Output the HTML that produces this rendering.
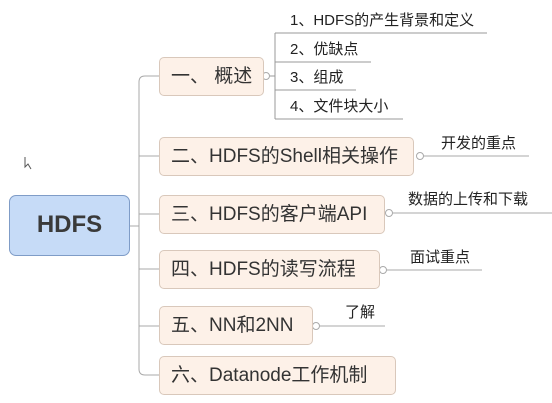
<!DOCTYPE html>
<html><head><meta charset="utf-8"><style>
body{margin:0;width:552px;height:403px;background:#fff;position:relative;overflow:hidden;font-family:"Liberation Sans","Noto Sans CJK SC",sans-serif;color:#333}
.b{position:absolute;background:#fdf1e8;border:1px solid #d9c8bb;border-radius:5px;box-sizing:border-box;font-size:19px;line-height:37px;padding-left:11px;white-space:nowrap}
.t{position:absolute;font-size:15px;white-space:nowrap;color:#222}
.root{position:absolute;left:9px;top:195px;width:121px;height:61px;background:#c6dbf7;border:1px solid #7f9cc7;border-radius:7px;box-sizing:border-box;font-weight:bold;font-size:24px;line-height:58px;text-align:center;color:#3a3a3a}
</style></head><body>
<svg width="552" height="403" style="position:absolute;left:0;top:0" fill="none" stroke="#a9a9a9" stroke-width="1">
<path d="M130 226H139"/>
<path d="M159 76H145Q139 76 139 82V369Q139 375 145 375H159"/>
<path d="M139 156H159M139 214H159M139 269H159M139 326H159"/>
<path d="M269 76H275M275 33V119M275 33H487M275 62H371M275 90H356M275 119H403" stroke="#999"/>
<path d="M420 156H529M389 213H552M383 270H482M316 326H385" stroke="#aaa"/>
<g fill="#fff" stroke="#aaa"><circle cx="266" cy="76" r="3.5"/><circle cx="420" cy="156" r="3.5"/><circle cx="389" cy="213" r="3.5"/><circle cx="383" cy="270" r="3.5"/><circle cx="316" cy="326" r="3.5"/></g>
<path d="M25 157V167L28 164L31 169" stroke="#555"/>
</svg>
<div class="root">HDFS</div>
<div class="b" style="left:159px;top:57px;width:105px;height:39px">一、 概述</div>
<div class="b" style="left:159px;top:137px;width:255px;height:39px">二、HDFS的Shell相关操作</div>
<div class="b" style="left:159px;top:195px;width:226px;height:39px">三、HDFS的客户端API</div>
<div class="b" style="left:159px;top:250px;width:221px;height:39px">四、HDFS的读写流程</div>
<div class="b" style="left:159px;top:306px;width:154px;height:39px">五、NN和2NN</div>
<div class="b" style="left:159px;top:356px;width:237px;height:39px">六、Datanode工作机制</div>
<div class="t" style="left:290px;top:9px">1、HDFS的产生背景和定义</div>
<div class="t" style="left:290px;top:38px">2、优缺点</div>
<div class="t" style="left:290px;top:66px">3、组成</div>
<div class="t" style="left:290px;top:95px">4、文件块大小</div>
<div class="t" style="left:441px;top:132px">开发的重点</div>
<div class="t" style="left:408px;top:188px">数据的上传和下载</div>
<div class="t" style="left:410px;top:246px">面试重点</div>
<div class="t" style="left:345px;top:301px">了解</div>
</body></html>
